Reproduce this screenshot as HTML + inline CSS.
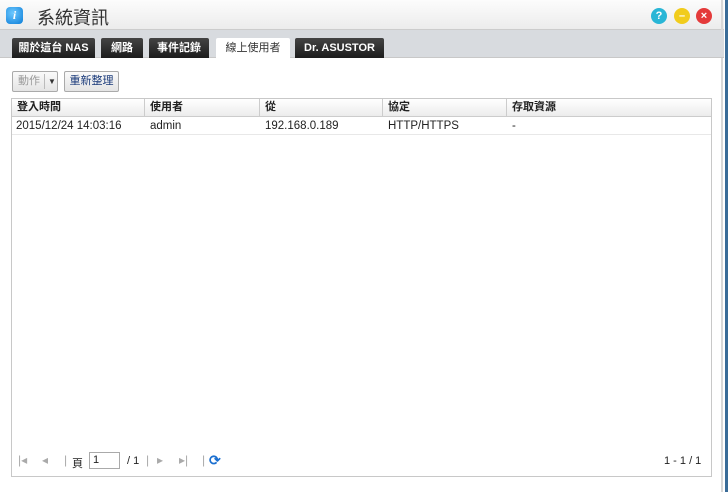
<!DOCTYPE html>
<html><head><meta charset="utf-8"><style>
*{margin:0;padding:0;box-sizing:border-box}
body{width:728px;height:492px;background:#fff;font-family:"Liberation Sans","Noto Sans CJK TC",sans-serif;font-size:11px;color:#222;position:relative;overflow:hidden}
.a{position:absolute}
.title{left:0;top:0;width:724px;height:30px;background:linear-gradient(#fcfcfc,#ececec);border-bottom:1px solid #ccc}
.tabbar{left:0;top:30px;width:724px;height:28px;background:#d8dbdf;border-bottom:1px solid #c8c8c8}
.tab{top:38px;height:20px;background:linear-gradient(#444,#1c1c1c);color:#fff;font-weight:bold;font-size:11px;text-align:center;line-height:20px;border-radius:2px 2px 0 0}
.tab.on{background:#fff;color:#333;font-weight:normal;height:21px}
.btn{top:71px;height:21px;border:1px solid #aaa;border-radius:2px;background:linear-gradient(#fafafa,#e4e4e4);line-height:19px;font-size:11px}
.grid{left:11px;top:98px;width:701px;height:379px;border:1px solid #c8c8c8}
.hdr{left:12px;top:99px;width:699px;height:18px;background:linear-gradient(#fff,#ececec);border-bottom:1px solid #ccc}
.c{position:absolute;top:0;height:100%;line-height:17px;padding-left:5px;font-weight:bold}
.row{left:12px;top:117px;width:699px;height:18px;border-bottom:1px solid #e8e8e8;font-size:11.5px}
.row .c{font-weight:normal;line-height:19px}
.sep{border-left:1px solid #ccc}
.circ{top:8px;width:16px;height:16px;border-radius:50%;color:#fff;font-size:11px;text-align:center;line-height:16px;font-weight:bold}
.pg{top:453px;color:#aaa;font-size:12px}
</style></head><body>
<div class="a title"></div>
<div class="a" style="left:6px;top:7px;width:17px;height:17px;border-radius:4px;background:radial-gradient(circle at 40% 35%,#6cc8ff,#0d7ed8);color:#fff;font:italic bold 12px 'Liberation Serif',serif;text-align:center;line-height:17px">i</div>
<div class="a" style="left:37px;top:4px;font-size:18px;color:#333">系統資訊</div>
<div class="a circ" style="left:651px;background:#29b6d6">?</div>
<div class="a circ" style="left:674px;background:#f1cc1c">–</div>
<div class="a circ" style="left:696px;background:#e43a3a">×</div>
<div class="a" style="left:721px;top:0;width:2px;height:492px;background:#d8d8d8"></div>
<div class="a" style="left:725px;top:0;width:3px;height:492px;background:#3a6c98"></div>
<div class="a tabbar"></div>
<div class="a tab" style="left:12px;width:83px">關於這台 NAS</div>
<div class="a tab" style="left:101px;width:42px">網路</div>
<div class="a tab" style="left:149px;width:60px">事件記錄</div>
<div class="a tab on" style="left:216px;width:74px">線上使用者</div>
<div class="a tab" style="left:295px;width:89px">Dr. ASUSTOR</div>
<div class="a btn" style="left:12px;width:46px;color:#999;padding-left:5px">動作<span style="position:absolute;left:31px;top:2px;height:15px;border-left:1px solid #bbb"></span><span style="position:absolute;left:35px;top:0;color:#333;font-size:8px">▼</span></div>
<div class="a btn" style="left:64px;width:55px;color:#1a3a7a;text-align:center">重新整理</div>
<div class="a grid"></div>
<div class="a hdr">
<div class="c" style="left:0">登入時間</div>
<div class="c sep" style="left:132px">使用者</div>
<div class="c sep" style="left:247px">從</div>
<div class="c sep" style="left:370px">協定</div>
<div class="c sep" style="left:494px">存取資源</div>
</div>
<div class="a row">
<div class="c" style="left:0;padding-left:4px">2015/12/24 14:03:16</div>
<div class="c" style="left:133px">admin</div>
<div class="c" style="left:248px">192.168.0.189</div>
<div class="c" style="left:371px">HTTP/HTTPS</div>
<div class="c" style="left:495px">-</div>
</div>
<div class="a pg" style="left:18px">|◂</div>
<div class="a pg" style="left:42px">◂</div>
<div class="a pg" style="left:64px">|</div>
<div class="a" style="left:72px;top:455px;font-size:11px">頁</div>
<div class="a" style="left:89px;top:452px;width:31px;height:17px;border:1px solid #aaa;padding-left:3px;line-height:15px">1</div>
<div class="a" style="left:127px;top:455px">/ 1</div>
<div class="a pg" style="left:146px">|</div>
<div class="a pg" style="left:157px">▸</div>
<div class="a pg" style="left:179px">▸|</div>
<div class="a pg" style="left:202px">|</div>
<div class="a" style="left:209px;top:452px;color:#1a6fd0;font-size:14px;font-weight:bold">⟳</div>
<div class="a" style="left:664px;top:455px">1 - 1 / 1</div>
</body></html>
